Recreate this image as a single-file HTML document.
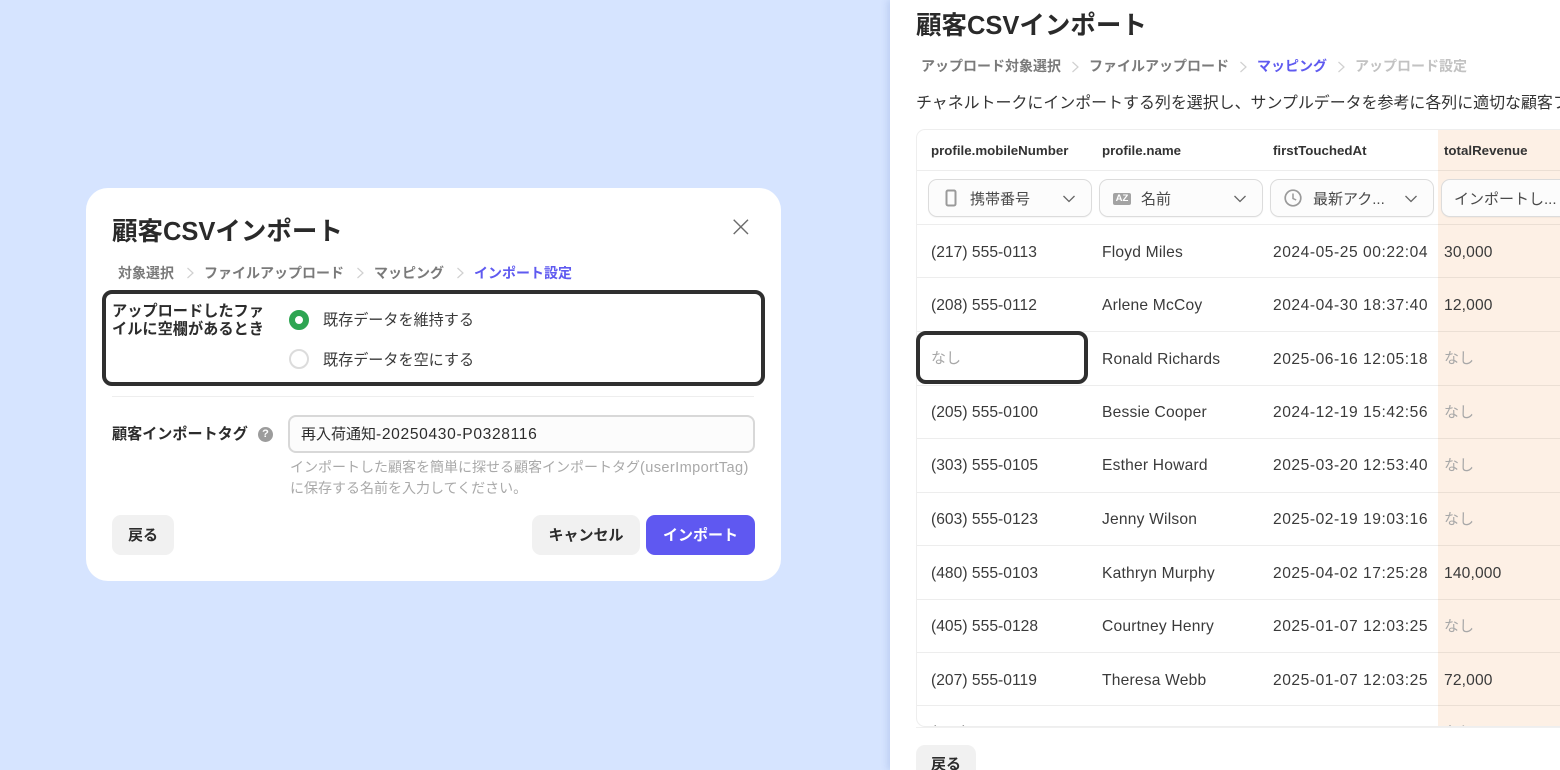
<!DOCTYPE html>
<html lang="ja"><head><meta charset="utf-8">
<style>
html,body{margin:0;padding:0;width:1560px;height:770px;overflow:hidden;background:#d6e4ff;}
*{box-sizing:border-box;}
body{font-family:"Liberation Sans","Noto Sans CJK JP",sans-serif;color:#313131;position:relative;}
.a{position:absolute;white-space:nowrap;}
.b{font-weight:700;}
.t{line-height:20px;}
.grey{color:#7a7a7a;}
.sep{position:absolute;}
.line{position:absolute;height:1px;background:#ececec;}
.rl{position:absolute;height:1px;left:917px;width:643px;background:rgba(0,0,0,.07);}
.btn{position:absolute;border-radius:9px;background:#f1f1f1;font-weight:700;font-size:15px;text-align:center;color:#2c2c2c;}
.sel{position:absolute;top:179px;height:38px;border:1px solid #dcdcdc;border-radius:9px;background:#fcfcfc;box-shadow:0 1px 1px rgba(0,0,0,.04);}
.cell{position:absolute;font-size:15.6px;line-height:20px;white-space:nowrap;color:#3a3a3a;}
.p{left:931px;letter-spacing:.03px;}
.n{left:1102px;letter-spacing:.2px;}
.d{left:1273px;letter-spacing:.54px;}
.r{left:1444px;letter-spacing:.15px;}
.none{color:#a8a8a8;letter-spacing:0;font-size:15px;}
.h{font-size:13.3px;top:141px;color:#333;}
.bc{font-size:14px;}
.s{font-size:15px;color:#4a4a4a;top:190px;}
</style></head><body>

<!-- modal -->
<div class="a" style="left:86px;top:188px;width:695px;height:393px;background:#fff;border-radius:22px;"></div>
<div class="a b" style="left:112px;top:215px;font-size:25.5px;line-height:34px;color:#2a2a2a;">顧客CSVインポート</div>
<svg class="a" style="left:732px;top:218px" width="18" height="18" viewBox="0 0 18 18"><path d="M1.7 1.7L16 16M16 1.7L1.7 16" stroke="#6b6b6b" stroke-width="1.4" fill="none"/></svg>

<div class="a b t grey bc" style="left:118px;top:263px;">対象選択</div>
<svg class="sep" style="left:186px;top:266px" width="9" height="14" viewBox="0 0 9 14"><path d="M1.5 2L7 7L1.5 12" stroke="#d0d0d0" stroke-width="1.2" fill="none"/></svg>
<div class="a b t grey bc" style="left:204px;top:263px;">ファイルアップロード</div>
<svg class="sep" style="left:356px;top:266px" width="9" height="14" viewBox="0 0 9 14"><path d="M1.5 2L7 7L1.5 12" stroke="#d0d0d0" stroke-width="1.2" fill="none"/></svg>
<div class="a b t grey bc" style="left:374px;top:263px;">マッピング</div>
<svg class="sep" style="left:456px;top:266px" width="9" height="14" viewBox="0 0 9 14"><path d="M1.5 2L7 7L1.5 12" stroke="#d0d0d0" stroke-width="1.2" fill="none"/></svg>
<div class="a b t bc" style="left:474px;top:263px;color:#5f5af0;">インポート設定</div>

<div class="a" style="left:102px;top:290px;width:663px;height:96px;border:4px solid #2f2f2f;border-radius:10px;"></div>
<div class="a b" style="left:112px;top:303px;font-size:15.2px;line-height:18px;color:#2c2c2c;">アップロードしたファ<br>イルに空欄があるとき</div>
<div class="a" style="left:289px;top:310px;width:20px;height:20px;border-radius:50%;background:#fff;border:6px solid #2ea552;"></div>
<div class="a t" style="left:323px;top:311px;font-size:15.1px;color:#3a3a3a;">既存データを維持する</div>
<div class="a" style="left:289px;top:349px;width:20px;height:20px;border-radius:50%;background:#fff;border:2px solid #dcdcdc;"></div>
<div class="a t" style="left:323px;top:351px;font-size:15.1px;color:#3a3a3a;">既存データを空にする</div>

<div class="line" style="left:112px;top:396px;width:642px;height:1px;background:#eeeeee;"></div>

<div class="a b t" style="left:112px;top:425px;font-size:15.1px;color:#2c2c2c;">顧客インポートタグ</div>
<div class="a b" style="left:258px;top:427px;width:15px;height:15px;border-radius:50%;background:#9c9c9c;color:#fff;font-size:11px;line-height:15px;text-align:center;">?</div>
<div class="a" style="left:288px;top:415px;width:467px;height:38px;border:2px solid #d8d8d8;border-radius:8px;background:#fcfcfc;"></div>
<div class="a t" style="left:301px;top:425px;font-size:15px;color:#2c2c2c;">再入荷通知<span style="letter-spacing:.65px;font-size:15.6px">-20250430-P0328116</span></div>
<div class="a" style="left:290px;top:457px;font-size:14px;line-height:20px;color:#a9a9a9;">インポートした顧客を簡単に探せる顧客インポートタグ<span style="letter-spacing:.38px;font-size:14.6px">(userImportTag)</span><br>に保存する名前を入力してください。</div>

<div class="btn" style="left:112px;top:515px;width:62px;height:40px;line-height:41px;">戻る</div>
<div class="btn" style="left:532px;top:515px;width:108px;height:40px;line-height:41px;">キャンセル</div>
<div class="btn" style="left:646px;top:515px;width:109px;height:40px;line-height:41px;background:#5f58f1;color:#fff;">インポート</div>

<!-- right panel -->
<div class="a" style="left:890px;top:0;width:670px;height:770px;background:#fff;box-shadow:-3px 0 6px rgba(90,120,190,.18);"></div>
<div class="a b" style="left:916px;top:9px;font-size:25.5px;line-height:34px;color:#2a2a2a;">顧客CSVインポート</div>

<div class="a b t grey bc" style="left:921px;top:56px;">アップロード対象選択</div>
<svg class="sep" style="left:1071px;top:60px" width="9" height="14" viewBox="0 0 9 14"><path d="M1.5 2L7 7L1.5 12" stroke="#d0d0d0" stroke-width="1.2" fill="none"/></svg>
<div class="a b t grey bc" style="left:1089px;top:56px;">ファイルアップロード</div>
<svg class="sep" style="left:1239px;top:60px" width="9" height="14" viewBox="0 0 9 14"><path d="M1.5 2L7 7L1.5 12" stroke="#d0d0d0" stroke-width="1.2" fill="none"/></svg>
<div class="a b t bc" style="left:1257px;top:56px;color:#5f5af0;">マッピング</div>
<svg class="sep" style="left:1337px;top:60px" width="9" height="14" viewBox="0 0 9 14"><path d="M1.5 2L7 7L1.5 12" stroke="#d0d0d0" stroke-width="1.2" fill="none"/></svg>
<div class="a b t bc" style="left:1355px;top:56px;color:#c2c2c2;">アップロード設定</div>

<div class="a t" style="left:916px;top:94px;font-size:15.95px;color:#333;width:644px;overflow:hidden;">チャネルトークにインポートする列を選択し、サンプルデータを参考に各列に適切な顧客フィールドを設定してください。</div>

<!-- table -->
<div class="a" style="left:916px;top:129px;width:660px;height:598px;border:1px solid #eeeeee;border-radius:9px;overflow:hidden;background:#fff;">
  <div class="a" style="left:521px;top:-1px;width:140px;height:600px;background:#fdf0e5;"></div>
  <div class="cell p" style="left:14px;top:593px;">(480) 555-0101</div>
  <div class="cell none" style="left:527px;top:593px;">なし</div>
</div>
<div class="rl" style="top:170px;"></div>
<div class="rl" style="top:224px;"></div>
<div class="rl" style="top:277px;"></div>
<div class="rl" style="top:331px;"></div>
<div class="rl" style="top:385px;"></div>
<div class="rl" style="top:438px;"></div>
<div class="rl" style="top:492px;"></div>
<div class="rl" style="top:545px;"></div>
<div class="rl" style="top:599px;"></div>
<div class="rl" style="top:652px;"></div>
<div class="rl" style="top:705px;"></div>

<div class="a b t h" style="left:931px;">profile.mobileNumber</div>
<div class="a b t h" style="left:1102px;">profile.name</div>
<div class="a b t h" style="left:1273px;">firstTouchedAt</div>
<div class="a b t h" style="left:1444px;">totalRevenue</div>

<!-- selects -->
<div class="sel" style="left:928px;width:164px;"></div>
<svg class="a" style="left:945px;top:189px" width="12" height="18" viewBox="0 0 12 18"><rect x="1.5" y="1.5" width="9" height="15" rx="1.5" fill="none" stroke="#9a9a9a" stroke-width="2"/></svg>
<div class="a t s" style="left:970px;">携帯番号</div>
<svg class="a" style="left:1062px;top:194px" width="14" height="10" viewBox="0 0 14 10"><path d="M1.5 2L7 7.5L12.5 2" stroke="#666" stroke-width="1.3" fill="none"/></svg>

<div class="sel" style="left:1099px;width:164px;"></div>
<div class="a b" style="left:1113px;top:193px;width:18px;height:12px;background:#a3a3a3;border-radius:2px;color:#fff;font-size:9.5px;line-height:12px;text-align:center;">AZ</div>
<div class="a t s" style="left:1141px;">名前</div>
<svg class="a" style="left:1233px;top:194px" width="14" height="10" viewBox="0 0 14 10"><path d="M1.5 2L7 7.5L12.5 2" stroke="#666" stroke-width="1.3" fill="none"/></svg>

<div class="sel" style="left:1270px;width:164px;"></div>
<svg class="a" style="left:1284px;top:189px" width="18" height="18" viewBox="0 0 18 18"><circle cx="9" cy="9" r="7.8" fill="none" stroke="#9a9a9a" stroke-width="1.7"/><path d="M9 4.5V9.5L12.2 11" fill="none" stroke="#9a9a9a" stroke-width="1.5"/></svg>
<div class="a t s" style="left:1313px;">最新アク...</div>
<svg class="a" style="left:1404px;top:194px" width="14" height="10" viewBox="0 0 14 10"><path d="M1.5 2L7 7.5L12.5 2" stroke="#666" stroke-width="1.3" fill="none"/></svg>

<div class="sel" style="left:1441px;width:164px;"></div>
<div class="a t s" style="left:1454px;">インポートし...</div>

<!-- rows -->
<div class="cell p" style="top:243px;">(217) 555-0113</div><div class="cell n" style="top:243px;">Floyd Miles</div><div class="cell d" style="top:243px;">2024-05-25 00:22:04</div><div class="cell r" style="top:243px;">30,000</div>
<div class="cell p" style="top:296px;">(208) 555-0112</div><div class="cell n" style="top:296px;">Arlene McCoy</div><div class="cell d" style="top:296px;">2024-04-30 18:37:40</div><div class="cell r" style="top:296px;">12,000</div>
<div class="cell none" style="left:931px;top:349px;">なし</div><div class="cell n" style="top:350px;">Ronald Richards</div><div class="cell d" style="top:350px;">2025-06-16 12:05:18</div><div class="cell none" style="left:1444px;top:349px;">なし</div>
<div class="cell p" style="top:403px;">(205) 555-0100</div><div class="cell n" style="top:403px;">Bessie Cooper</div><div class="cell d" style="top:403px;">2024-12-19 15:42:56</div><div class="cell none" style="left:1444px;top:403px;">なし</div>
<div class="cell p" style="top:456px;">(303) 555-0105</div><div class="cell n" style="top:456px;">Esther Howard</div><div class="cell d" style="top:456px;">2025-03-20 12:53:40</div><div class="cell none" style="left:1444px;top:456px;">なし</div>
<div class="cell p" style="top:510px;">(603) 555-0123</div><div class="cell n" style="top:510px;">Jenny Wilson</div><div class="cell d" style="top:510px;">2025-02-19 19:03:16</div><div class="cell none" style="left:1444px;top:510px;">なし</div>
<div class="cell p" style="top:564px;">(480) 555-0103</div><div class="cell n" style="top:564px;">Kathryn Murphy</div><div class="cell d" style="top:564px;">2025-04-02 17:25:28</div><div class="cell r" style="top:564px;">140,000</div>
<div class="cell p" style="top:617px;">(405) 555-0128</div><div class="cell n" style="top:617px;">Courtney Henry</div><div class="cell d" style="top:617px;">2025-01-07 12:03:25</div><div class="cell none" style="left:1444px;top:617px;">なし</div>
<div class="cell p" style="top:671px;">(207) 555-0119</div><div class="cell n" style="top:671px;">Theresa Webb</div><div class="cell d" style="top:671px;">2025-01-07 12:03:25</div><div class="cell r" style="top:671px;">72,000</div>

<div class="a" style="left:916px;top:727px;width:644px;height:1px;background:#f0f0f0;"></div>

<div class="a" style="left:916px;top:331px;width:172px;height:53px;border:4px solid #2f2f2f;border-radius:10px;"></div>

<div class="btn" style="left:916px;top:745px;width:60px;height:40px;line-height:39px;">戻る</div>
</body></html>
